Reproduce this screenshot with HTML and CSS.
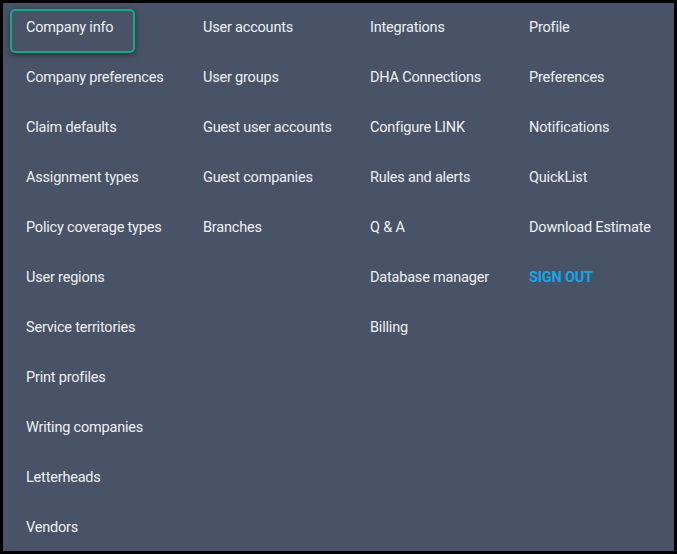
FILE: index.html
```html
<!DOCTYPE html>
<html>
<head>
<meta charset="utf-8">
<link rel="stylesheet" href="styles.css">
</head>
<body>
<div class="panel">
  <ul class="col col-1">
    <li class="item active">Company info</li>
    <li class="item">Company preferences</li>
    <li class="item">Claim defaults</li>
    <li class="item">Assignment types</li>
    <li class="item">Policy coverage types</li>
    <li class="item">User regions</li>
    <li class="item">Service territories</li>
    <li class="item">Print profiles</li>
    <li class="item">Writing companies</li>
    <li class="item">Letterheads</li>
    <li class="item">Vendors</li>
  </ul>
  <ul class="col col-2">
    <li class="item">User accounts</li>
    <li class="item">User groups</li>
    <li class="item">Guest user accounts</li>
    <li class="item">Guest companies</li>
    <li class="item">Branches</li>
  </ul>
  <ul class="col col-3">
    <li class="item">Integrations</li>
    <li class="item">DHA Connections</li>
    <li class="item">Configure LINK</li>
    <li class="item">Rules and alerts</li>
    <li class="item">Q &amp; A</li>
    <li class="item">Database manager</li>
    <li class="item">Billing</li>
  </ul>
  <ul class="col col-4">
    <li class="item">Profile</li>
    <li class="item">Preferences</li>
    <li class="item">Notifications</li>
    <li class="item">QuickList</li>
    <li class="item">Download Estimate</li>
    <li class="item signout">SIGN OUT</li>
  </ul>
</div>
</body>
</html>
```

FILE: styles.css
```css
html, body {
  margin: 0;
  padding: 0;
  background: #000;
}
.panel {
  box-sizing: border-box;
  width: 677px;
  height: 554px;
  border: 3px solid #000;
  background: #485367;
  display: flex;
  padding-left: 7px;
  font-family: Roboto, "Liberation Sans", sans-serif;
  font-size: 14.5px;
  letter-spacing: -0.2px;
  color: #eef0f3;
}
.col {
  list-style: none;
  margin: 0;
  padding: 6px 0 0 0;
  display: flex;
  flex-direction: column;
  align-items: flex-start;
  gap: 2px;
}
.col-1 { width: 177px; }
.col-2 { width: 167px; }
.col-3 { width: 159px; }
.col-4 { flex: 1; }
.item {
  box-sizing: border-box;
  border: 2px solid transparent;
  border-radius: 5px;
  padding: 7px 14px 17px 14px;
  line-height: 20px;
  height: 48px;
  white-space: nowrap;
}
.item.active {
  border-color: #14a88c;
  width: 125px;
  height: 44px;
  margin-bottom: 4px;
  box-shadow: 0 2px 6px rgba(0, 0, 0, 0.45);
}
.item.signout {
  color: #16a6e6;
  font-weight: 700;
}
```
